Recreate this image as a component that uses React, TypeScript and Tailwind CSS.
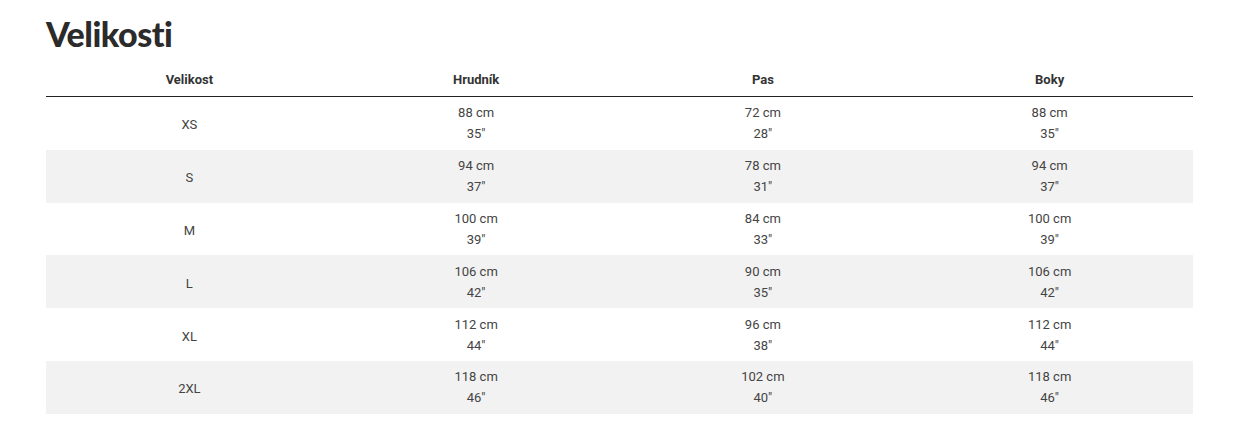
const rows = [
  { size: "XS", chest: ["88 cm", '35"'], waist: ["72 cm", '28"'], hips: ["88 cm", '35"'] },
  { size: "S", chest: ["94 cm", '37"'], waist: ["78 cm", '31"'], hips: ["94 cm", '37"'] },
  { size: "M", chest: ["100 cm", '39"'], waist: ["84 cm", '33"'], hips: ["100 cm", '39"'] },
  { size: "L", chest: ["106 cm", '42"'], waist: ["90 cm", '35"'], hips: ["106 cm", '42"'] },
  { size: "XL", chest: ["112 cm", '44"'], waist: ["96 cm", '38"'], hips: ["112 cm", '44"'] },
  { size: "2XL", chest: ["118 cm", '46"'], waist: ["102 cm", '40"'], hips: ["118 cm", '46"'] },
];

const Cell = ({ lines }: { lines: string[] }) => (
  <div className="flex flex-col items-center justify-center pt-[5px] pb-[5px]">
    {lines.map((l, i) => (
      <span key={i}>{l}</span>
    ))}
  </div>
);

const App = () => {
  return (
    <div className="bg-white w-[1234px] h-[448px] pt-[14px] pl-[46px]" style={{ fontFamily: "Roboto, 'Liberation Sans', sans-serif" }}>
      {/* Heading */}
      <h1
        className="text-[34px] leading-[40px] font-black text-[#2b2b2b] tracking-[-0.5px]"
        style={{ fontFamily: "Lato, 'Liberation Sans', sans-serif" }}
      >
        Velikosti
      </h1>

      {/* Table */}
      <div className="w-[1147px] mt-[8px]">
        <div className="grid grid-cols-4 border-b border-[#222] text-[13px] font-bold text-[#333] leading-[21px]">
          {["Velikost", "Hrudník", "Pas", "Boky"].map((h) => (
            <div key={h} className="text-center pt-[7px] pb-[6px]">
              {h}
            </div>
          ))}
        </div>
        {rows.map((r, i) => (
          <div
            key={r.size}
            className={`grid grid-cols-4 text-[13px] leading-[21px] text-[#444] h-[52.8px] ${i % 2 === 1 ? "bg-[#f2f2f2]" : "bg-white"}`}
          >
            <div className="flex items-center justify-center pt-[3px]">{r.size}</div>
            <Cell lines={r.chest} />
            <Cell lines={r.waist} />
            <Cell lines={r.hips} />
          </div>
        ))}
      </div>
    </div>
  );
};

export default App;
